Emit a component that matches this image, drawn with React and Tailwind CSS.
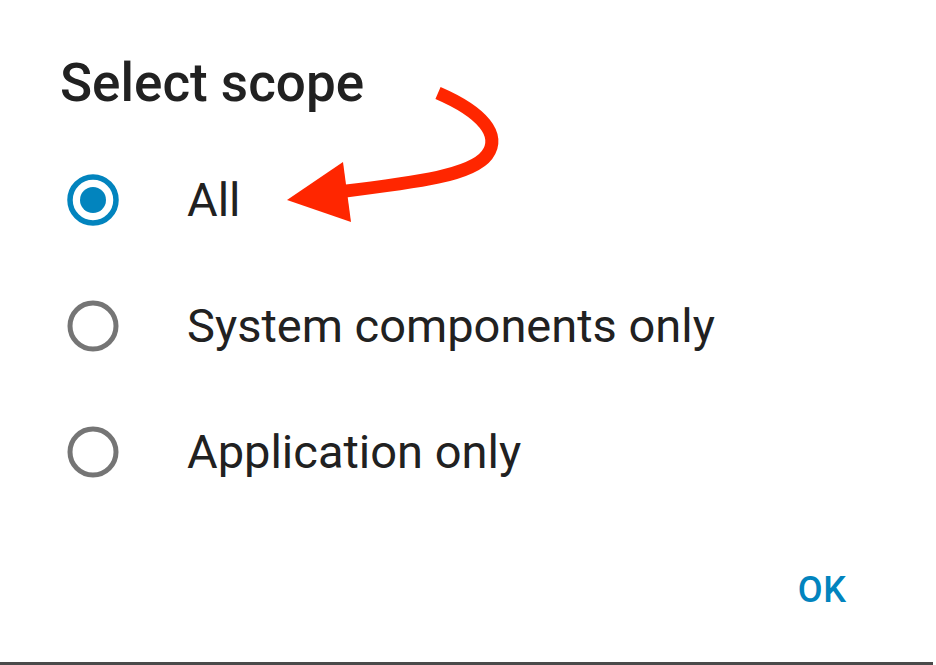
import React from 'react';

const options = ['All', 'System components only', 'Application only'];

function Radio({ checked }) {
    return (
        <svg width="52" height="52" viewBox="0 0 52 52" className="shrink-0">
            <circle cx="26" cy="26" r="23" fill="none" stroke={checked ? '#0284be' : '#757575'} strokeWidth={checked ? 5.5 : 5} />
            {checked && <circle cx="26" cy="26" r="13" fill="#0284be" />}
        </svg>
    );
}

export default function App() {
    return (
        <div className="relative w-[933px] h-[665px] bg-white border-b-[3px] border-[#4a4a4a] flex flex-col" style={{ fontFamily: 'Roboto, "Liberation Sans", sans-serif' }}>
            <h1 className="mt-[53px] pl-[60px] text-[53px] leading-[60px] font-medium text-[#212121]">Select scope</h1>
            <div className="mt-[24px] flex flex-col">
                {options.map((label, i) => (
                    <div key={label} className="h-[126px] flex items-center pl-[67px]">
                        <Radio checked={i === 0} />
                        <span className="ml-[68px] text-[47px] leading-[60px] text-[#212121]">{label}</span>
                    </div>
                ))}
            </div>
            <div className="mt-[57px] flex justify-end pr-[86px]">
                <button className="text-[36px] leading-[36px] font-medium text-[#0284be] tracking-wide">OK</button>
            </div>

            <svg className="absolute left-0 top-0 pointer-events-none" width="936" height="665" viewBox="0 0 936 665">
                <path d="M438 93 C482 112 502 135 487 155 C472 175 420 182 338 192" fill="none" stroke="#ff2600" strokeWidth="13" />
                <polygon points="287,200 343,162 351,222" fill="#ff2600" />
            </svg>
        </div>
    );
}
